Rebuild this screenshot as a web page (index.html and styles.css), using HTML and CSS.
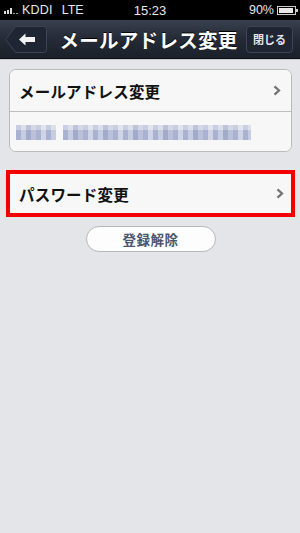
FILE: index.html
```html
<!DOCTYPE html>
<html lang="ja">
<head>
<meta charset="utf-8">
<link rel="stylesheet" href="styles.css">
</head>
<body>
<div class="screen">
  <div class="status">
    <div class="st-left">
      <span class="bars"><i class="b1"></i><i class="b2"></i><i class="b3"></i><i class="b4 off"></i><i class="b5 off"></i></span>
      <span class="carrier">KDDI</span>
      <span class="net">LTE</span>
    </div>
    <div class="st-time">15:23</div>
    <div class="st-right">
      <span class="pct">90%</span>
      <span class="battery"><span class="level"></span></span>
    </div>
  </div>
  <div class="navbar">
    <div class="back">
      <svg width="42" height="27" viewBox="0 0 42 27">
        <path d="M10.5 0.5 H38.5 a3 3 0 0 1 3 3 V23.5 a3 3 0 0 1 -3 3 H10.5 L0.8 13.5 Z" fill="#1f2533" stroke="#3d4557" stroke-width="1"/>
        <path d="M14 13.5 L20.5 7.5 V11 H30 V16 H20.5 V19.5 Z" fill="#f2f2f2"/>
      </svg>
    </div>
    <div class="title">メールアドレス変更</div>
    <div class="close">閉じる</div>
  </div>
  <div class="content">
    <div class="card">
      <div class="row">
        <span class="label">メールアドレス変更</span>
        <span class="chev"><svg width="8" height="11" viewBox="0 0 8 11"><path d="M1.5 1.3 L6 5.5 L1.5 9.7" fill="none" stroke="#747474" stroke-width="2.3"/></svg></span>
      </div>
      <div class="row email">
        <div class="blur">
          <div class="seg s1"></div>
          <div class="seg s2"></div>
        </div>
      </div>
    </div>
    <div class="highlight">
      <div class="row single">
        <span class="label">パスワード変更</span>
        <span class="chev"><svg width="8" height="11" viewBox="0 0 8 11"><path d="M1.5 1.3 L6 5.5 L1.5 9.7" fill="none" stroke="#747474" stroke-width="2.3"/></svg></span>
      </div>
    </div>
    <div class="btn-wrap"><div class="pill">登録解除</div></div>
  </div>
</div>
</body>
</html>
```
FILE: styles.css
```css
* { box-sizing: border-box; margin: 0; padding: 0; }
html, body { width: 300px; height: 533px; overflow: hidden; }
body {
  font-family: "Noto Sans CJK JP", "Liberation Sans", sans-serif;
  background: #e4e5e8;
}
.screen { width: 300px; height: 533px; display: flex; flex-direction: column; }
.status {
  height: 20px; background: #000; color: #e8e8e8;
  display: flex; align-items: center; justify-content: space-between;
  font-family: "Liberation Sans", sans-serif; font-size: 12.5px;
  padding: 0 4px 0 4px; position: relative;
}
.st-left { display: flex; align-items: center; }
.bars { display: flex; align-items: flex-end; gap: 1px; height: 8px; margin-right: 3px; }
.bars i { display: block; width: 2px; background: #ddd; }
.bars .b1 { height: 3px; } .bars .b2 { height: 4px; } .bars .b3 { height: 6px; }
.bars .b4, .bars .b5 { height: 1px; background: #999; width: 2px; }
.carrier { margin-left: 1px; letter-spacing: 0.2px; }
.net { margin-left: 9px; }
.st-time { position: absolute; left: 0; right: 0; text-align: center; font-size: 13px; pointer-events: none; }
.st-right { display: flex; align-items: center; }
.pct { margin-right: 3px; }
.battery {
  width: 19px; height: 9px; border: 1px solid #ccc; position: relative; padding: 1px; display: flex;
}
.battery::after { content: ""; position: absolute; right: -3px; top: 2px; width: 2px; height: 3px; background: #ccc; }
.level { flex: 1; background: #e8e8e8; margin-right: 1px; }
.navbar {
  height: 39px; display: flex; align-items: center; justify-content: space-between;
  padding: 0 7px 0 5px;
  background: linear-gradient(#39414f 0%, #262c38 45%, #1b202a 100%);
  border-bottom: 1px solid #0c0e12;
  box-shadow: 0 1px 0 #c9cacd;
}
.back { width: 42px; height: 27px; display: flex; }
.title {
  color: #fff; font-weight: bold; font-size: 19.5px; letter-spacing: 0.3px;
  text-shadow: 0 -1px 0 #000; flex: 1; text-align: center; margin-left: 4px;
}
.close {
  width: 47px; height: 27px; border-radius: 4px;
  background: #1f2533; border: 1px solid #3d4557;
  color: #e6e6e6; font-size: 11px; font-weight: bold;
  display: flex; align-items: center; justify-content: center;
}
.content { flex: 1; padding: 10px 8px 0 9px; display: flex; flex-direction: column; }
.card {
  background: #f7f7f7; border: 1px solid #b9babd; border-radius: 7px; overflow: hidden;
}
.row {
  height: 41px; display: flex; align-items: center; justify-content: space-between;
  padding: 0 10px 0 9px; background: #f7f7f7;
}
.row + .row { border-top: 1px solid #bdbec1; height: 40px; }
.label { font-size: 15.5px; font-weight: bold; color: #111; letter-spacing: 0.2px; }
.chev { display: flex; }
.email { padding-left: 6px; justify-content: flex-start; }
.blur { display: flex; gap: 7px; height: 15px; margin-top: 2px; }
.seg {
  height: 15px;
  background:
    repeating-linear-gradient(90deg, rgba(255,255,255,0) 0 5px, rgba(255,255,255,0.35) 5px 10px, rgba(120,130,170,0.15) 10px 15px, rgba(255,255,255,0.2) 15px 20px, rgba(255,255,255,0) 20px 25px, rgba(255,255,255,0.45) 25px 30px),
    linear-gradient(#c9cfe1 0 33%, #a9b2d0 33% 100%);
}
.s1 { width: 40px; }
.s2 { width: 188px; }
.highlight {
  margin: 18px -3px 0 -3px; border: 4px solid #f30000; background: #f7f7f7;
}
.highlight .row.single { height: 39px; padding: 0 7px 0 9px; }
.btn-wrap { display: flex; justify-content: center; margin-top: 9px; }
.pill {
  width: 130px; height: 26px; border-radius: 13px;
  background: #fdfdfd; border: 1px solid #b7b8bc;
  color: #4d546c; font-size: 13.5px; font-weight: bold;
  display: flex; align-items: center; justify-content: center; letter-spacing: 0.5px;
}
```
